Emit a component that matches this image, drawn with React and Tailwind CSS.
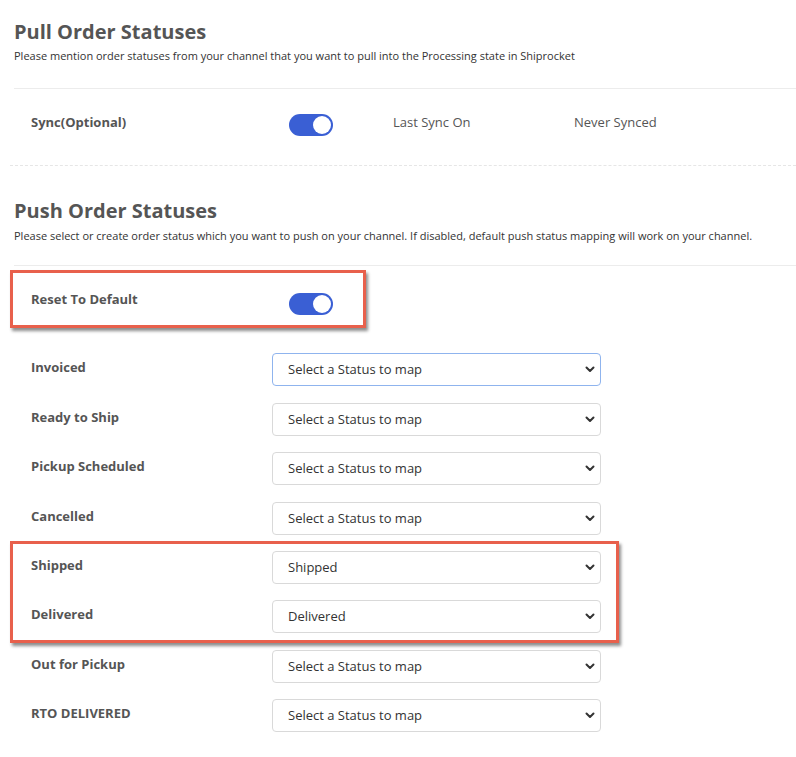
import React from "react";

function Toggle() {
  return (
    <div className="relative w-[44px] h-[22px] rounded-full bg-[#3a5fd4] shrink-0">
      <div className="absolute right-[2px] top-[2px] w-[18px] h-[18px] rounded-full bg-white"></div>
    </div>
  );
}

function Chevron() {
  return (
    <svg width="10" height="7" viewBox="0 0 10 7" className="shrink-0">
      <path d="M1.5 1.5 L5 5 L8.5 1.5" fill="none" stroke="#333" strokeWidth="2" strokeLinecap="round" strokeLinejoin="round" />
    </svg>
  );
}

function Select({ value, focused }) {
  return (
    <div
      className={
        "w-[329px] h-[33px] rounded-[4px] border bg-white flex items-center justify-between pl-[15px] pr-[5px] text-[13px] text-[#333] " +
        (focused ? "border-[#8fb4ee]" : "border-[#d9d9d9]")
      }
    >
      <span>{value}</span>
      <Chevron />
    </div>
  );
}

function Row({ label, value, focused, className = "" }) {
  return (
    <div className={"flex items-start pl-[17px] " + className}>
      <div className="w-[241px] pt-[5px] text-[13px] font-bold text-[#555] leading-[18px]">{label}</div>
      <Select value={value} focused={focused} />
    </div>
  );
}

export default function App() {
  const placeholder = "Select a Status to map";
  return (
    <div
      className="w-[796px] h-[757px] bg-white overflow-hidden pl-[14px] pt-[20px] flex flex-col"
      style={{ fontFamily: "'Open Sans', 'Liberation Sans', sans-serif" }}
    >
      <h1 className="text-[20px] leading-[24px] font-bold text-[#555]">Pull Order Statuses</h1>
      <p className="mt-[4px] text-[11px] leading-[16px] text-[#333]">
        Please mention order statuses from your channel that you want to pull into the Processing state in Shiprocket
      </p>
      <div className="mt-[24px] h-px bg-[#ececec]"></div>

      <div className="mt-[25px] flex items-center pl-[17px] h-[22px]">
        <div className="w-[258px] text-[13px] font-bold text-[#555] -mt-[4px]">Sync(Optional)</div>
        <Toggle />
        <div className="ml-[60px] w-[181px] text-[13px] text-[#555] -mt-[4px]">Last Sync On</div>
        <div className="text-[13px] text-[#555] -mt-[4px]">Never Synced</div>
      </div>

      <div className="mt-[29px] -ml-[4px] border-t border-dashed border-[#e6e6e6]"></div>

      <h2 className="mt-[33px] text-[20px] leading-[24px] font-bold text-[#555]">Push Order Statuses</h2>
      <p className="mt-[5px] text-[11px] leading-[16px] text-[#333]">
        Please select or create order status which you want to push on your channel. If disabled, default push status mapping will work on your channel.
      </p>
      <div className="mt-[21px] h-px bg-[#ececec]"></div>

      <div className="mt-[4px] -ml-[4px] w-[356px] h-[58px] border-[3px] border-[#e8604c] shadow-[2px_3px_3px_rgba(0,0,0,0.45)] flex items-start pl-[18px]">
        <div className="w-[258px] pt-[17px] text-[13px] font-bold text-[#555] leading-[18px]">Reset To Default</div>
        <div className="mt-[20px]">
          <Toggle />
        </div>
      </div>

      <Row label="Invoiced" value={placeholder} focused className="mt-[25px]" />
      <Row label="Ready to Ship" value={placeholder} className="mt-[17px]" />
      <Row label="Pickup Scheduled" value={placeholder} className="mt-[16px]" />
      <Row label="Cancelled" value={placeholder} className="mt-[17px]" />

      <div className="mt-[6px] -ml-[4px] w-[609px] border-[3px] border-[#e8604c] shadow-[2px_3px_3px_rgba(0,0,0,0.45)] pt-[7px] pb-[7px] flex flex-col">
        <div className="flex items-start pl-[18px]">
          <div className="w-[241px] pt-[5px] text-[13px] font-bold text-[#555] leading-[18px]">Shipped</div>
          <Select value="Shipped" />
        </div>
        <div className="flex items-start pl-[18px] mt-[16px]">
          <div className="w-[241px] pt-[5px] text-[13px] font-bold text-[#555] leading-[18px]">Delivered</div>
          <Select value="Delivered" />
        </div>
      </div>

      <Row label="Out for Pickup" value={placeholder} className="mt-[7px]" />
      <Row label="RTO DELIVERED" value={placeholder} className="mt-[16px]" />
    </div>
  );
}
